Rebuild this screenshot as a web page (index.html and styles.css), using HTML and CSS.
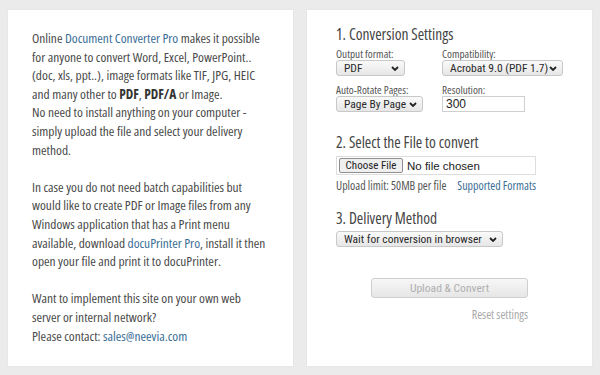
FILE: index.html
```html
<!DOCTYPE html>
<html lang="en">
<head>
<meta charset="utf-8">
<title>Document Converter Pro</title>
<link rel="stylesheet" href="styles.css">
</head>
<body>
<div class="page">
  <section class="panel info">
    <p>Online <a href="#">Document Converter Pro</a> makes it possible for anyone to convert Word, Excel, PowerPoint.. (doc, xls, ppt..), image formats like TIF, JPG, HEIC and many other to <b>PDF</b>, <b>PDF/A</b> or Image.<br>No need to install anything on your computer - simply upload the file and select your delivery method.</p>
    <p>In case you do not need batch capabilities but would like to create PDF or Image files from any Windows application that has a Print menu available, download <a href="#">docuPrinter Pro</a>, install it then open your file and print it to docuPrinter.</p>
    <p>Want to implement this site on your own web server or internal network?<br>Please contact: <a href="#">sales@neevia.com</a></p>
  </section>
  <section class="panel form">
    <h2 class="step">1. Conversion Settings</h2>
    <div class="grid">
      <div class="field">
        <label class="lbl">Output format:</label>
        <span class="sel w-pdf"><select><option>PDF</option></select><svg class="chev" viewBox="0 0 8 5"><path d="M1 1l3 3 3-3" /></svg></span>
      </div>
      <div class="field">
        <label class="lbl">Compatibility:</label>
        <span class="sel w-compat"><select><option>Acrobat 9.0 (PDF 1.7)</option></select><svg class="chev" viewBox="0 0 8 5"><path d="M1 1l3 3 3-3" /></svg></span>
      </div>
      <div class="field">
        <label class="lbl">Auto-Rotate Pages:</label>
        <span class="sel w-rotate"><select><option>Page By Page</option></select><svg class="chev" viewBox="0 0 8 5"><path d="M1 1l3 3 3-3" /></svg></span>
      </div>
      <div class="field">
        <label class="lbl">Resolution:</label>
        <input class="txt" type="text" value="300">
      </div>
    </div>

    <h2 class="step s2">2. Select the File to convert</h2>
    <div class="filebox"><span class="filebtn">Choose File</span><span class="filename">No file chosen</span></div>
    <div class="limit"><span>Upload limit: 50MB per file</span><a href="#">Supported Formats</a></div>

    <h2 class="step s3">3. Delivery Method</h2>
    <span class="sel w-delivery"><select><option>Wait for conversion in browser</option></select><svg class="chev" viewBox="0 0 8 5"><path d="M1 1l3 3 3-3" /></svg></span>

    <div class="actions">
      <button class="convert" disabled>Upload &amp; Convert</button>
      <a class="reset" href="#">Reset settings</a>
    </div>
  </section>
</div>
</body>
</html>
```
FILE: styles.css
```css
* { box-sizing: border-box; }
html, body { margin: 0; padding: 0; }
body {
  background: #ebebeb;
  font-family: "Open Sans", sans-serif;
  font-stretch: 75%;
  color: #4a4a4a;
  width: 600px;
  height: 375px;
  overflow: hidden;
}
.page {
  display: flex;
  gap: 14px;
  padding: 10px 8px 9px;
  height: 375px;
}
.panel {
  width: 285px;
  background: #fff;
  box-shadow: 0 0 2px rgba(0,0,0,0.06);
}
.info {
  padding: 19px 23px 0 24px;
  font-size: 13.4px;
  line-height: 18.6px;
}
.info p { margin: 0 0 18.6px; }
.info a { color: #3a6e96; text-decoration: none; }
.info b { color: #333; font-weight: 700; }

.form { padding: 15px 29px 0 29px; }
.step {
  margin: 0;
  font-size: 15.5px;
  line-height: 18px;
  font-weight: 400;
  color: #444;
}
.grid {
  display: grid;
  grid-template-columns: 106px 1fr;
  row-gap: 7px;
  margin-top: 4px;
}
.field { display: flex; flex-direction: column; align-items: flex-start; }
.lbl {
  font-size: 11.2px;
  line-height: 14px;
  color: #555;
  margin-bottom: -1px;
}
.sel { position: relative; display: block; height: 16px; }
.sel select {
  -webkit-appearance: none;
  appearance: none;
  display: block;
  height: 16px;
  width: 100%;
  border: 1px solid #c8c8c8;
  border-radius: 3px;
  background: linear-gradient(#fafafa, #e6e6e6);
  font-family: "Roboto Condensed", "Liberation Sans", sans-serif;
  font-stretch: normal;
  font-size: 11.5px;
  color: #2a2a2a;
  padding: 0 14px 0 7px;
  line-height: 14px;
}
.chev {
  position: absolute;
  right: 6px;
  top: 6px;
  width: 8px;
  height: 5px;
  fill: none;
  stroke: #222;
  stroke-width: 1.8;
  pointer-events: none;
}
.w-pdf { width: 69px; }
.w-compat { width: 121px; }
.w-rotate { width: 87px; }
.w-delivery { width: 167px; }
.txt {
  width: 83px;
  height: 16px;
  border: 1px solid #cfcfcf;
  font-family: "Liberation Sans", Arial, sans-serif;
  font-size: 12px;
  color: #222;
  padding: 0 3px;
  margin: 0;
}
.s2 { margin-top: 21px; }
.filebox {
  margin-top: 5px;
  width: 200px;
  height: 19px;
  border: 1px solid #ddd;
  display: flex;
  align-items: center;
  padding-left: 2px;
  font-family: "Liberation Sans", Arial, sans-serif;
  font-size: 11.5px;
  color: #222;
  white-space: nowrap;
}
.filebtn {
  height: 15px;
  width: 64px;
  border: 1px solid #8f8f8f;
  border-radius: 2px;
  background: #efefef;
  display: flex;
  align-items: center;
  justify-content: center;
  margin-right: 4px;
  font-family: "Roboto Condensed", "Liberation Sans", sans-serif;
  font-stretch: normal;
  font-size: 11px;
}
.limit {
  margin-top: 3px;
  font-size: 11.9px;
  line-height: 14px;
  color: #555;
  display: flex;
  gap: 11px;
  white-space: nowrap;
}
.limit a { color: #3a6e96; text-decoration: none; }
.s3 { margin-top: 17px; }
.w-delivery { margin-top: 4px; }
.actions {
  margin: 31px auto 0;
  width: 157px;
  display: flex;
  flex-direction: column;
  align-items: flex-end;
}
.convert {
  display: block;
  width: 157px;
  height: 20px;
  border: 1px solid #cfcfcf;
  border-radius: 3px;
  background: linear-gradient(#f7f7f7, #e6e6e6);
  color: #b0b0b0;
  font-family: "Roboto Condensed", "Liberation Sans", sans-serif;
  font-stretch: normal;
  font-size: 11.6px;
  padding: 0;
}
.reset {
  margin-top: 10px;
  font-size: 12px;
  line-height: 14px;
  color: #a8a8a8;
  text-decoration: none;
}
```
